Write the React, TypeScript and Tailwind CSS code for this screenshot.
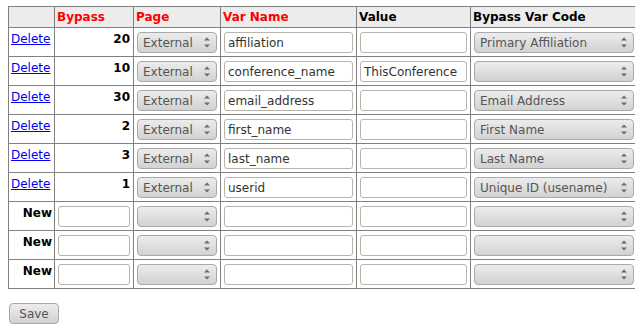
import React from "react";

type Row = {
  bypass: string;
  page: string;
  name: string;
  value: string;
  code: string;
};

const rows: Row[] = [
  { bypass: "20", page: "External", name: "affiliation", value: "", code: "Primary Affiliation" },
  { bypass: "10", page: "External", name: "conference_name", value: "ThisConference", code: "" },
  { bypass: "30", page: "External", name: "email_address", value: "", code: "Email Address" },
  { bypass: "2", page: "External", name: "first_name", value: "", code: "First Name" },
  { bypass: "3", page: "External", name: "last_name", value: "", code: "Last Name" },
  { bypass: "1", page: "External", name: "userid", value: "", code: "Unique ID (usename)" },
];

const cell = "h-[29px] border-r border-b border-[#808080]";

function TextBox({ value, width }: { value: string; width: string }) {
  return (
    <div
      className={`ml-[3px] mt-[4px] flex h-[21px] items-center rounded-[3px] border border-[#b9b3ab] bg-white pl-[3px] text-[12px] text-[#333] ${width}`}
    >
      {value}
    </div>
  );
}

function Dropdown({ value, width }: { value: string; width: string }) {
  return (
    <div
      className={`ml-[3px] mt-[4px] flex h-[21px] items-center justify-between rounded-[4px] border border-[#a9a9a9] bg-[linear-gradient(180deg,#ececec,#d2d2d2)] pl-[5px] pr-[6px] text-[12px] text-[#555] ${width}`}
    >
      <span>{value}</span>
      <svg width="6" height="11" viewBox="0 0 6 11" className="shrink-0">
        <path d="M0 3.5 L3 0.5 L6 3.5 Z" fill="#6a6a6a" />
        <path d="M0 7.5 L3 10.5 L6 7.5 Z" fill="#6a6a6a" />
      </svg>
    </div>
  );
}

export default function App() {
  return (
    <div className="w-[635px] overflow-hidden bg-white font-['DejaVu_Sans',sans-serif]">
      <div className="pl-[8px] pt-[6px]">
        <div className="grid w-[633px] grid-cols-[46px_79px_87px_136px_114px_170px] border-t border-l border-[#808080]">
          {/* header */}
          <div className="h-[21px] border-r border-b border-[#808080] bg-[#ececec]" />
          {[
            { label: "Bypass", red: true },
            { label: "Page", red: true },
            { label: "Var Name", red: true },
            { label: "Value", red: false },
            { label: "Bypass Var Code", red: false },
          ].map((h) => (
            <div
              key={h.label}
              className={`flex h-[21px] items-center border-r border-b border-[#808080] bg-[#ececec] pl-[2px] text-[12px] font-bold ${
                h.red ? "text-[#f00]" : "text-black"
              }`}
            >
              {h.label}
            </div>
          ))}

          {/* existing rows */}
          {rows.map((r) => (
            <React.Fragment key={r.name}>
              <div className={`${cell} pl-[2px] pt-[4px] text-[12px] leading-[15px]`}>
                <a href="#" className="text-[#0000ee] underline">
                  Delete
                </a>
              </div>
              <div className={`${cell} pr-[3px] pt-[4px] text-right text-[12px] leading-[15px] font-bold text-black`}>
                {r.bypass}
              </div>
              <div className={cell}>
                <Dropdown value={r.page} width="w-[80px]" />
              </div>
              <div className={cell}>
                <TextBox value={r.name} width="w-[129px]" />
              </div>
              <div className={cell}>
                <TextBox value={r.value} width="w-[107px]" />
              </div>
              <div className={cell}>
                <Dropdown value={r.code} width="w-[160px]" />
              </div>
            </React.Fragment>
          ))}

          {/* new rows */}
          {[0, 1, 2].map((i) => (
            <React.Fragment key={i}>
              <div className={`${cell} pr-[2px] pt-[4px] text-right text-[12px] leading-[15px] font-bold text-black`}>
                New
              </div>
              <div className={cell}>
                <TextBox value="" width="w-[72px]" />
              </div>
              <div className={cell}>
                <Dropdown value="" width="w-[80px]" />
              </div>
              <div className={cell}>
                <TextBox value="" width="w-[129px]" />
              </div>
              <div className={cell}>
                <TextBox value="" width="w-[107px]" />
              </div>
              <div className={cell}>
                <Dropdown value="" width="w-[160px]" />
              </div>
            </React.Fragment>
          ))}
        </div>

        <button className="ml-[1px] mt-[14px] h-[21px] w-[50px] rounded-[4px] border border-[#a9a9a9] bg-[linear-gradient(180deg,#ececec,#d2d2d2)] text-[12px] text-[#555]">
          Save
        </button>
      </div>
    </div>
  );
}
